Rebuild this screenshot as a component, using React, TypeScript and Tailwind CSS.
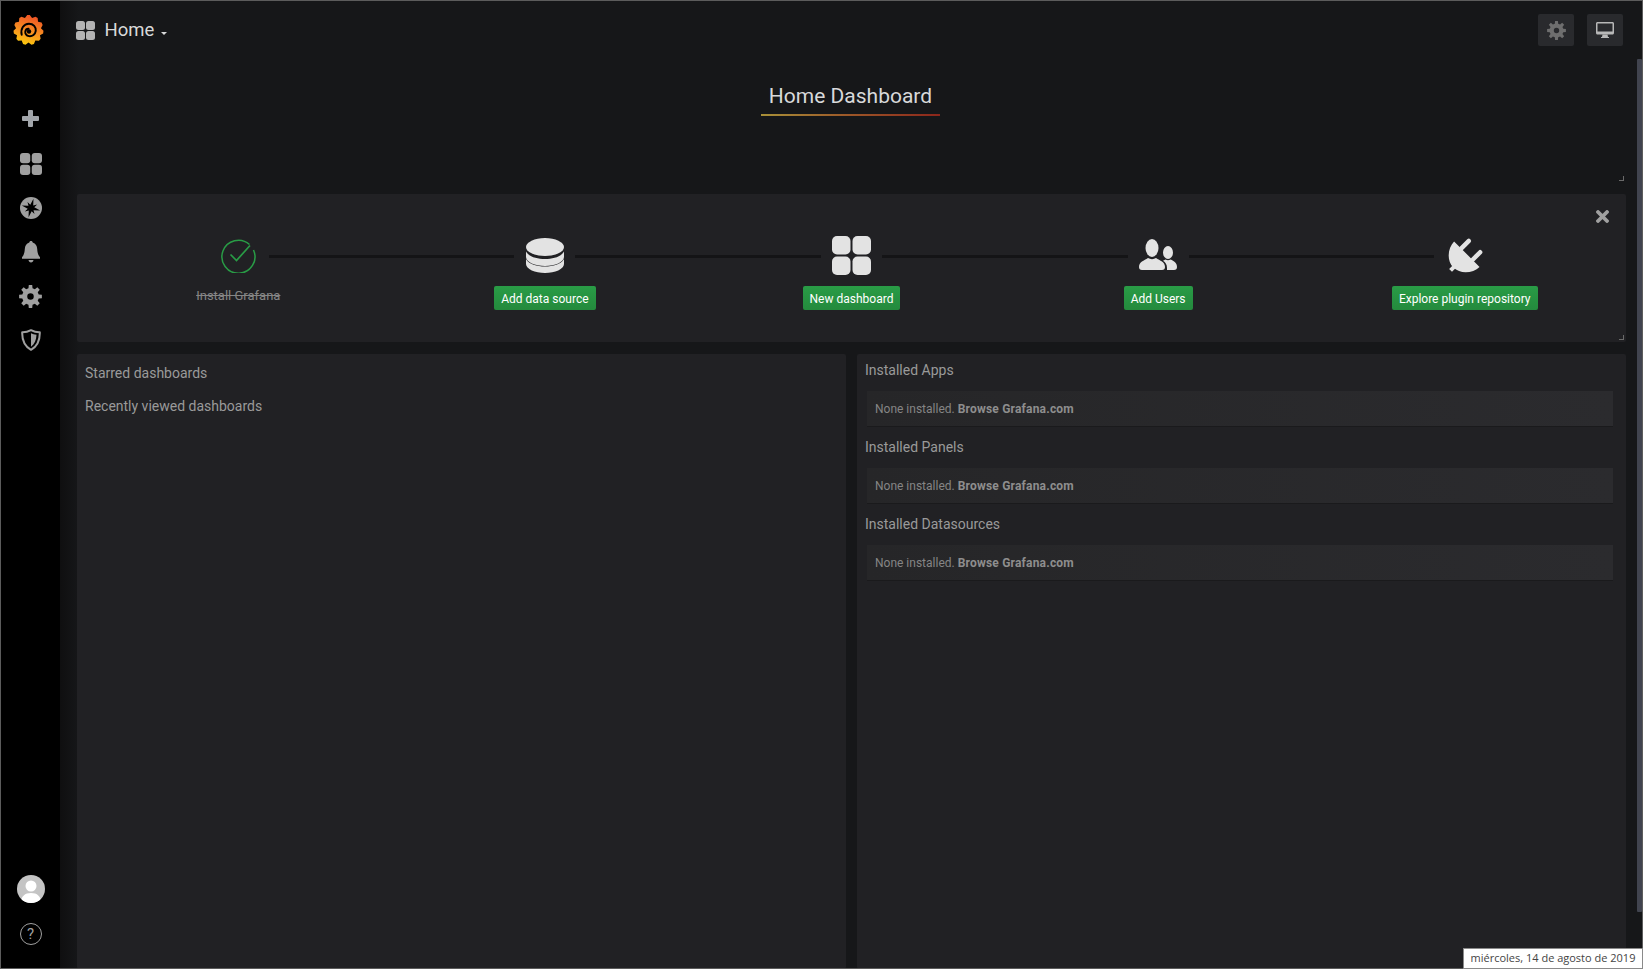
import React from "react";

const gearPts = (() => {
  const pts: string[] = [];
  const n = 11;
  for (let i = 0; i < n; i++) {
    const a = (i / n) * Math.PI * 2 - Math.PI / 2;
    const d = Math.PI / n;
    const p = (r: number, t: number) => `${(16 + r * Math.cos(t)).toFixed(2)},${(16 + r * Math.sin(t)).toFixed(2)}`;
    pts.push(p(15.5, a - d * 0.3), p(15.5, a + d * 0.3), p(13, a + d));
  }
  return pts.join(" ");
})();

const cogPath = (() => {
  const n = 8;
  const c = 12;
  let d = "";
  for (let i = 0; i < n; i++) {
    const a = (i / n) * Math.PI * 2 - Math.PI / 2;
    const s = Math.PI / n;
    const p = (r: number, t: number) => `${(c + r * Math.cos(t)).toFixed(2)} ${(c + r * Math.sin(t)).toFixed(2)}`;
    d += `${i === 0 ? "M" : "L"}${p(8.8, a - s * 0.62)}L${p(12, a - s * 0.38)}L${p(12, a + s * 0.38)}L${p(8.8, a + s * 0.62)}`;
  }
  d += "Z M12 8.600a3.400 3.400 0 1 0 0 6.800a3.400 3.400 0 1 0 0-6.800Z";
  return d;
})();

function Logo() {
  return (
    <svg width="31" height="32" viewBox="0 0 32 32">
      <defs>
        <linearGradient id="lg" x1="0.2" y1="1" x2="0.5" y2="0">
          <stop offset="0" stopColor="#fcd00c" />
          <stop offset="0.45" stopColor="#f79420" />
          <stop offset="1" stopColor="#ef5526" />
        </linearGradient>
      </defs>
      <polygon points={gearPts} fill="url(#lg)" />
      <path d="M9 21C7.500 15 11 9.500 16.500 9.500c4.500 0 7.500 3.500 7 7.500-.5 3.500-3.500 5.800-7 5.300-2.800-.5-4.200-2.800-3.800-4.800.4-1.900 1.900-2.800 3.400-2.700" fill="none" stroke="#000" strokeWidth="2" strokeLinecap="round" />
      <circle cx="16.500" cy="17.500" r="2.300" fill="#000" />
    </svg>
  );
}

function Grid({ size, gap, r, color }: { size: number; gap: number; r: number; color: string }) {
  const c = (size - gap) / 2;
  const p = c + gap;
  return (
    <svg width={size} height={size} viewBox={`0 0 ${size} ${size}`} fill={color}>
      <rect x="0" y="0" width={c} height={c} rx={r} />
      <rect x={p} y="0" width={c} height={c} rx={r} />
      <rect x="0" y={p} width={c} height={c} rx={r} />
      <rect x={p} y={p} width={c} height={c} rx={r} />
    </svg>
  );
}

function Gear({ size, color }: { size: number; color: string }) {
  return (
    <svg width={size} height={size} viewBox="0 0 24 24" fill={color}>
      <path fillRule="evenodd" d={cogPath} />
    </svg>
  );
}

function Compass() {
  return (
    <svg width="22" height="22" viewBox="0 0 22 22">
      <circle cx="11" cy="11" r="11" fill="#a0a0a0" />
      <path transform="rotate(15 11 11)" d="M11 1.500L12.500 8 16 6 14 9.500 20.500 11 14 12.500 16 16 12.500 14 11 20.500 9.500 14 6 16 8 12.500 1.500 11 8 9.500 6 6 9.500 8Z" fill="#000" />
    </svg>
  );
}

function Bell() {
  return (
    <svg width="18" height="22" viewBox="0 0 18 22" fill="#a0a0a0">
      <path d="M9 0c1 0 1.700.7 1.700 1.600 3 .8 4.300 3.400 4.500 6.400.2 3.400.8 6 2.800 8.200v1.500H0v-1.500c2-2.200 2.600-4.800 2.800-8.200C3 5 4.300 2.400 7.300 1.600 7.300.7 8 0 9 0z" />
      <path d="M6.500 19h5C11.300 20.500 10.300 21.500 9 21.500S6.700 20.500 6.500 19z" />
    </svg>
  );
}

function Shield() {
  return (
    <svg width="20" height="22" viewBox="0 0 20 22">
      <path d="M10 1.200C13 2.800 16 3.400 18.800 3.300 19 10.500 16.500 17 10 20.800 3.500 17 1 10.500 1.200 3.300 4 3.400 7 2.800 10 1.200z" fill="none" stroke="#a0a0a0" strokeWidth="2" strokeLinejoin="round" />
      <path d="M10 4.200C11.500 5 13.500 5.600 15.500 5.700 15.300 10.800 13.500 15 10 17.800z" fill="#a0a0a0" />
    </svg>
  );
}

function Database() {
  return (
    <svg width="38" height="35" viewBox="0 0 38 35" fill="#e3e3e3">
      <ellipse cx="19" cy="9" rx="19" ry="9" />
      <path d="M0 13.500C3 19 11 21 19 21S35 19 38 13.500V19C38 24 29 28 19 28S0 24 0 19Z" />
      <path d="M0 21C3 26.500 11 28.500 19 28.500S35 26.500 38 21V26C38 31 29 35 19 35S0 31 0 26Z" />
    </svg>
  );
}

function Users() {
  return (
    <svg width="38" height="32" viewBox="0 0 38 32" fill="#e3e3e3">
      <ellipse cx="13" cy="9" rx="6.500" ry="9" />
      <path d="M0 28c0-5 5-6.500 9-9 2.500 1.500 5.500 1.500 8 0 4 2.500 9 4 9 9 0 2-1 3-3 3H3c-2 0-3-1-3-3z" />
      <ellipse cx="29" cy="13.500" rx="5" ry="6.500" />
      <path d="M28 31v-2c0-3.500-1.500-5.500-4-7.200l2.500-1.300c1.500 1 3.500 1 5 0 3.500 1.500 6.500 3.500 6.500 7.500 0 2-1 3-3 3z" />
    </svg>
  );
}

function Plug() {
  return (
    <svg width="35" height="35" viewBox="0 0 35 35" fill="#e3e3e3" className="overflow-visible">
      <g transform="rotate(45 17 19)">
        <rect x="6.800" y="2" width="4.500" height="15" rx="2.200" />
        <rect x="22.800" y="2" width="4.500" height="15" rx="2.200" />
        <path d="M-1 15h36c0 9-8 19-18 19S-1 24-1 15z" />
        <rect x="15" y="32" width="4" height="6" />
      </g>
    </svg>
  );
}

function Desktop() {
  return (
    <svg width="18" height="16" viewBox="0 0 18 16" fill="#b8b8b8">
      <path fillRule="evenodd" d="M1.500 0h15C17.300 0 18 .7 18 1.500v9.500c0 .8-.7 1.500-1.500 1.500h-15C.7 12.500 0 11.800 0 11V1.500C0 .7.700 0 1.500 0zM1.500 1.500V9.500h15V1.500z" />
      <path d="M6.500 12.500h5l.5 2.500h1v1H5v-1h1z" />
    </svg>
  );
}

const Line = ({ on }: { on: boolean }) => (
  <div className={on ? "h-[3px] flex-1 bg-[#141416]" : "h-[3px] flex-1"} />
);

function Step({ icon, label, first, last }: { icon: React.ReactNode; label: string; first?: boolean; last?: boolean }) {
  return (
    <div className="flex flex-col items-center">
      <div className="flex h-[40px] w-full items-center">
        <Line on={!first} />
        <div className="flex w-[61px] justify-center pb-[2px]">{icon}</div>
        <Line on={!last} />
      </div>
      {first ? (
        <div className="mt-[8px] h-[24px] text-[13px] leading-[24px] text-[#858585] line-through">{label}</div>
      ) : (
        <button className="mt-[10px] h-[24px] rounded-[2px] bg-linear-to-b from-[#299c46] to-[#248a3d] px-[7px] pt-[2px] text-[12px] leading-[22px] text-white">
          {label}
        </button>
      )}
    </div>
  );
}

function Plugin({ title }: { title: string }) {
  return (
    <div>
      <div className="flex h-[21px] items-center pl-[8px] text-[14px] text-[#9a9a9a]">{title}</div>
      <div className="mb-[11px] ml-[10px] mr-[13px] mt-[10px] flex h-[35px] items-center bg-linear-to-r from-[#262628] to-[#2b2b2e] pl-[8px] pt-[1.500px] text-[12px] text-[#858585] shadow-[0_1px_0_#1a1a1c]">
        None installed.&nbsp;<b className="font-bold tracking-[0.2px] text-[#8e8e8e]">Browse Grafana.com</b>
      </div>
    </div>
  );
}

export default function App() {
  return (
    <div className="relative flex h-[969px] w-[1643px] overflow-hidden border-l border-t border-[#5c5c5c] bg-[#161719] font-['Roboto',sans-serif]">
      <aside className="flex h-full w-[59px] shrink-0 flex-col items-center bg-black">
        <div className="flex h-[57px] w-full items-center justify-center pr-[5px]">
          <Logo />
        </div>
        <div className="mt-[38px] flex h-[44px] items-center">
          <svg width="17" height="17" viewBox="0 0 17 17" fill="#a2a6ab">
            <path d="M7 0h3a1 1 0 0 1 1 1v5h5a1 1 0 0 1 1 1v3a1 1 0 0 1-1 1h-5v5a1 1 0 0 1-1 1H7a1 1 0 0 1-1-1v-5H1a1 1 0 0 1-1-1V7a1 1 0 0 1 1-1h5V1a1 1 0 0 1 1-1z" />
          </svg>
        </div>
        <div className="mt-[2px] flex h-[44px] items-center"><Grid size={22} gap={1.5} r={3} color="#a0a0a0" /></div>
        <div className="flex h-[44px] items-center"><Compass /></div>
        <div className="flex h-[44px] items-center"><Bell /></div>
        <div className="flex h-[44px] items-center"><Gear size={23} color="#a0a0a0" /></div>
        <div className="flex h-[43px] items-center"><Shield /></div>
        <div className="mt-auto mb-[24px] flex flex-col items-center">
          <div className="relative h-[28px] w-[28px] overflow-hidden rounded-full bg-[#c4c4c4]">
            <svg width="28" height="28" viewBox="0 0 28 28" fill="#fff">
              <circle cx="14" cy="11" r="5.500" />
              <path d="M4 28c0-7 4-10 10-10s10 3 10 10z" />
            </svg>
          </div>
          <div className="mt-[20px] flex h-[22px] w-[22px] items-center justify-center rounded-full border-[1.500px] border-[#a0a0a0] text-[15px] leading-none text-[#a0a0a0]">?</div>
        </div>
      </aside>

      <main className="flex min-w-0 flex-1 flex-col bg-linear-to-r from-[#0f0f10] from-0% to-[#161719] to-[1.2%] pl-[17px] pr-[17px]">
        <header className="flex h-[58px] shrink-0 items-center justify-between">
          <div className="-ml-px flex items-center">
            <Grid size={19} gap={1} r={2.500} color="#b3b3b3" />
            <span className="ml-[9.500px] text-[18.500px] leading-none text-[#d8d9da]">Home</span>
            <span className="ml-[7px] mt-[6px] h-0 w-0 border-x-[3px] border-t-[3px] border-x-transparent border-t-[#d8d9da]" />
          </div>
          <div className="mr-[3px] flex gap-[13px]">
            <button className="flex h-[32px] w-[36px] items-center justify-center rounded-[2px] bg-[#292a2d]"><Gear size={19} color="#6e6e6e" /></button>
            <button className="flex h-[32px] w-[36px] items-center justify-center rounded-[2px] bg-[#292a2d]"><Desktop /></button>
          </div>
        </header>

        <section className="relative flex h-[135px] shrink-0 flex-col items-center pr-[2px]">
          <h1 className="mt-[21px] px-[8px] text-[21px] leading-[32px] text-[#d8d9da]">Home Dashboard</h1>
          <div className="mt-[2px] h-[1.500px] w-[179px] bg-[linear-gradient(90deg,#a89038,#9c5628,#8c261b)]" />
          <span className="absolute bottom-[13px] right-[2px] h-[5px] w-[5px] border-b border-r border-[#6a6a6a]" />
        </section>

        <section className="relative grid h-[148px] shrink-0 grid-cols-5 rounded-[2px] bg-[#212124] px-[8px] pt-[42px]">
          <Step first label="Install Grafana" icon={
            <svg className="-mt-px" width="36" height="36" viewBox="0 0 36 36" fill="none" stroke="#299c46" strokeWidth="1.500">
              <path d="M29.500 7.500A16.500 16.500 0 1 0 33.500 13" />
              <path d="M10.500 17.500l6 6L30 8.500" strokeWidth="1.700" />
            </svg>
          } />
          <Step label="Add data source" icon={<Database />} />
          <Step label="New dashboard" icon={<Grid size={39} gap={2} r={5} color="#e3e3e3" />} />
          <Step label="Add Users" icon={<Users />} />
          <Step last label="Explore plugin repository" icon={<Plug />} />
          <svg className="absolute right-[17px] top-[16px]" width="13" height="13" viewBox="0 0 13 13" stroke="#a0a0a0" strokeWidth="3.800" strokeLinecap="round">
            <path d="M2 2l9 9M11 2l-9 9" />
          </svg>
          <span className="absolute bottom-[2px] right-[2px] h-[5px] w-[5px] border-b border-r border-[#6a6a6a]" />
        </section>

        <div className="mt-[12px] grid min-h-0 flex-1 grid-cols-2 gap-[11px]">
          <section className="rounded-[2px] bg-[#212124] px-[8px] pt-[10px] text-[14px] text-[#9a9a9a]">
            <div className="flex h-[18px] items-center">Starred dashboards</div>
            <div className="mt-[15px] flex h-[18px] items-center">Recently viewed dashboards</div>
          </section>
          <section className="rounded-[2px] bg-[#212124] pt-[6px]">
            <Plugin title="Installed Apps" />
            <Plugin title="Installed Panels" />
            <Plugin title="Installed Datasources" />
          </section>
        </div>
      </main>

      <div className="absolute right-[1px] top-[58px] h-[853px] w-[5px] rounded-[1px] bg-[#41444f]" />
      <div className="absolute bottom-0 right-0 top-0 w-px bg-[#5c5c5c]" />
      <div className="absolute bottom-0 left-0 right-0 h-px bg-[#5c5c5c]" />
      <div className="absolute bottom-0 right-0 flex h-[21px] w-[180px] items-center justify-center border border-[#8a8a8a] bg-white font-['Open_Sans',sans-serif] text-[11px] text-[#444]">
        miércoles, 14 de agosto de 2019
      </div>
    </div>
  );
}
